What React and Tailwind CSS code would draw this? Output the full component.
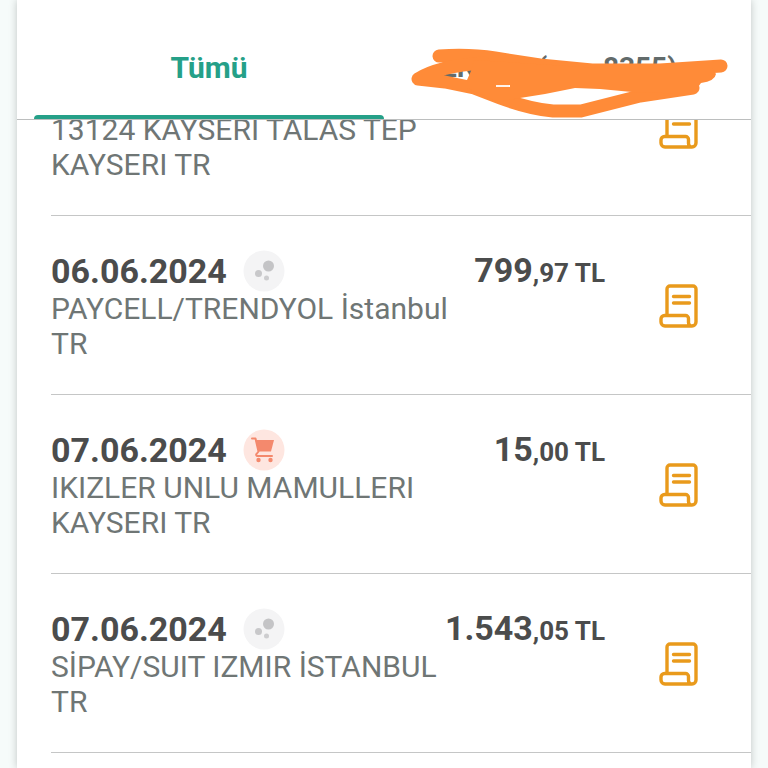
const transactions = [
  { id: 1, date: '05.06.2024', kind: 'other', text: '13124 KAYSERI TALAS TEP KAYSERI TR', whole: '', cents: '' },
  { id: 2, date: '06.06.2024', kind: 'other', text: 'PAYCELL/TRENDYOL İstanbul TR', whole: '799', cents: '97' },
  { id: 3, date: '07.06.2024', kind: 'market', text: 'IKIZLER UNLU MAMULLERI KAYSERI TR', whole: '15', cents: '00' },
  { id: 4, date: '07.06.2024', kind: 'other', text: 'SİPAY/SUIT IZMIR İSTANBUL TR', whole: '1.543', cents: '05' },
];

function ReceiptIcon() {
  return (
    <svg width="40" height="44" viewBox="0 0 40 44" fill="none" stroke="#e99a1c" strokeWidth="3.4" strokeLinecap="round" strokeLinejoin="round" aria-hidden="true">
      <path d="M8 31V5a3 3 0 0 1 3-3h23a3 3 0 0 1 3 3v33a4 4 0 0 1-4 4H6a4 4 0 0 1-4-4v-3a3.500 3.500 0 0 1 3.500-3.500h21a3 3 0 0 1 3 3v4a3.500 3.500 0 0 0 3.500 3.500" />
      <path d="M14.500 12.500h16M14.500 19h16" />
    </svg>
  );
}

function CategoryBadge({ kind }) {
  if (kind === 'market') {
    return (
      <svg className="shrink-0" width="42" height="42" viewBox="0 0 42 42" aria-hidden="true">
        <circle cx="21" cy="21" r="20.500" fill="#fee6e0" />
        <path d="M9 9.500h3.500l3 13-2 2.500a1.200 1.200 0 0 0 1 2h14.500" fill="none" stroke="#f4896d" strokeWidth="2" strokeLinecap="round" strokeLinejoin="round" />
        <path d="M12.500 11h18.500l-3 11.500H15.500z" fill="#f4896d" />
        <circle cx="15.500" cy="31" r="2.200" fill="#f4896d" />
        <circle cx="27.500" cy="31" r="2.200" fill="#f4896d" />
      </svg>
    );
  }
  return (
    <svg className="shrink-0" width="42" height="42" viewBox="0 0 42 42" aria-hidden="true">
      <circle cx="21" cy="21" r="20.500" fill="#f4f4f5" />
      <circle cx="25.500" cy="16" r="5.500" fill="#c4c4c6" />
      <circle cx="15.500" cy="23.500" r="3.500" fill="#c8c8ca" />
      <circle cx="23.500" cy="28" r="2.500" fill="#cdcdcf" />
    </svg>
  );
}

function Transaction({ item }) {
  return (
    <li className="flex items-center border-b border-[#c5c6c6] pt-[35px] pb-[33px]">
      <div className="min-w-0 flex-1">
        <div className="flex h-10 items-center justify-between">
          <div className="flex items-center gap-4">
            <time className="text-[34px] leading-10 font-bold">{item.date}</time>
            <CategoryBadge kind={item.kind} />
          </div>
          {item.whole && (
            <p className="text-[34px] leading-10 font-bold">
              {item.whole}
              <span className="text-[26px]">,{item.cents} TL</span>
            </p>
          )}
        </div>
        <p className="max-w-[410px] text-[30px] leading-[35px] text-[#6f7675]">{item.text}</p>
      </div>
      <button type="button" aria-label="Dekont" className="mr-[52px] ml-[54px] shrink-0">
        <ReceiptIcon />
      </button>
    </li>
  );
}

function Scribble() {
  return (
    <svg className="absolute top-[45px] left-[27px] w-[318px]" viewBox="411 45 318 75" aria-hidden="true">
      <g fill="none" stroke="#ff8b38" strokeWidth="13" strokeLinecap="round" strokeLinejoin="round">
        <path d="M439 56Q470 54 495 58L540 65L592 70L660 70L721 66" />
        <path d="M484 63Q438 66 418 79L445 82L474 88L500 98Q530 109 553 111L581 111Q608 104 640 96L693 88" />
      </g>
      <path d="M474 60L600 68L712 68L716 74Q715 81 701 83L693 94L632 92L600 89L575 88L545 94L520 98L498 102L467 88L467 80L471 71Z" fill="#ff8b38" />
      <path d="M496 86H510" stroke="#fff" strokeWidth="1.800" />
    </svg>
  );
}

export default function App() {
  return (
    <div className="h-screen overflow-hidden bg-[#f6fbfa] px-[17px] font-[Roboto,sans-serif] text-[#4b4c4c]">
      <main className="flex h-full flex-col bg-white shadow-[0_0_8px_rgba(0,0,0,0.22)]">
        <nav className="flex h-[120px] shrink-0 border-b border-[#bcbebe] px-[17px]">
          <button type="button" className="flex flex-1 flex-col text-[30px] font-bold text-[#25a088]">
            <span className="flex w-full flex-1 items-center justify-center pt-5">Tümü</span>
            <span className="h-1 w-full rounded-t-sm bg-[#25a088]" />
          </button>
          <div className="relative flex-1">
            <button type="button" className="flex h-full w-full items-center justify-between px-[57px] pt-4 text-[28px] font-bold text-[#626b6b]">
              <span>EN</span>
              <span>(...... 8355)</span>
            </button>
            <Scribble />
          </div>
        </nav>
        <div className="min-h-0 flex-1 overflow-hidden">
          <ul className="-mt-[83px] pl-[34px]">
            {transactions.map((item) => (
              <Transaction key={item.id} item={item} />
            ))}
          </ul>
        </div>
      </main>
    </div>
  );
}
